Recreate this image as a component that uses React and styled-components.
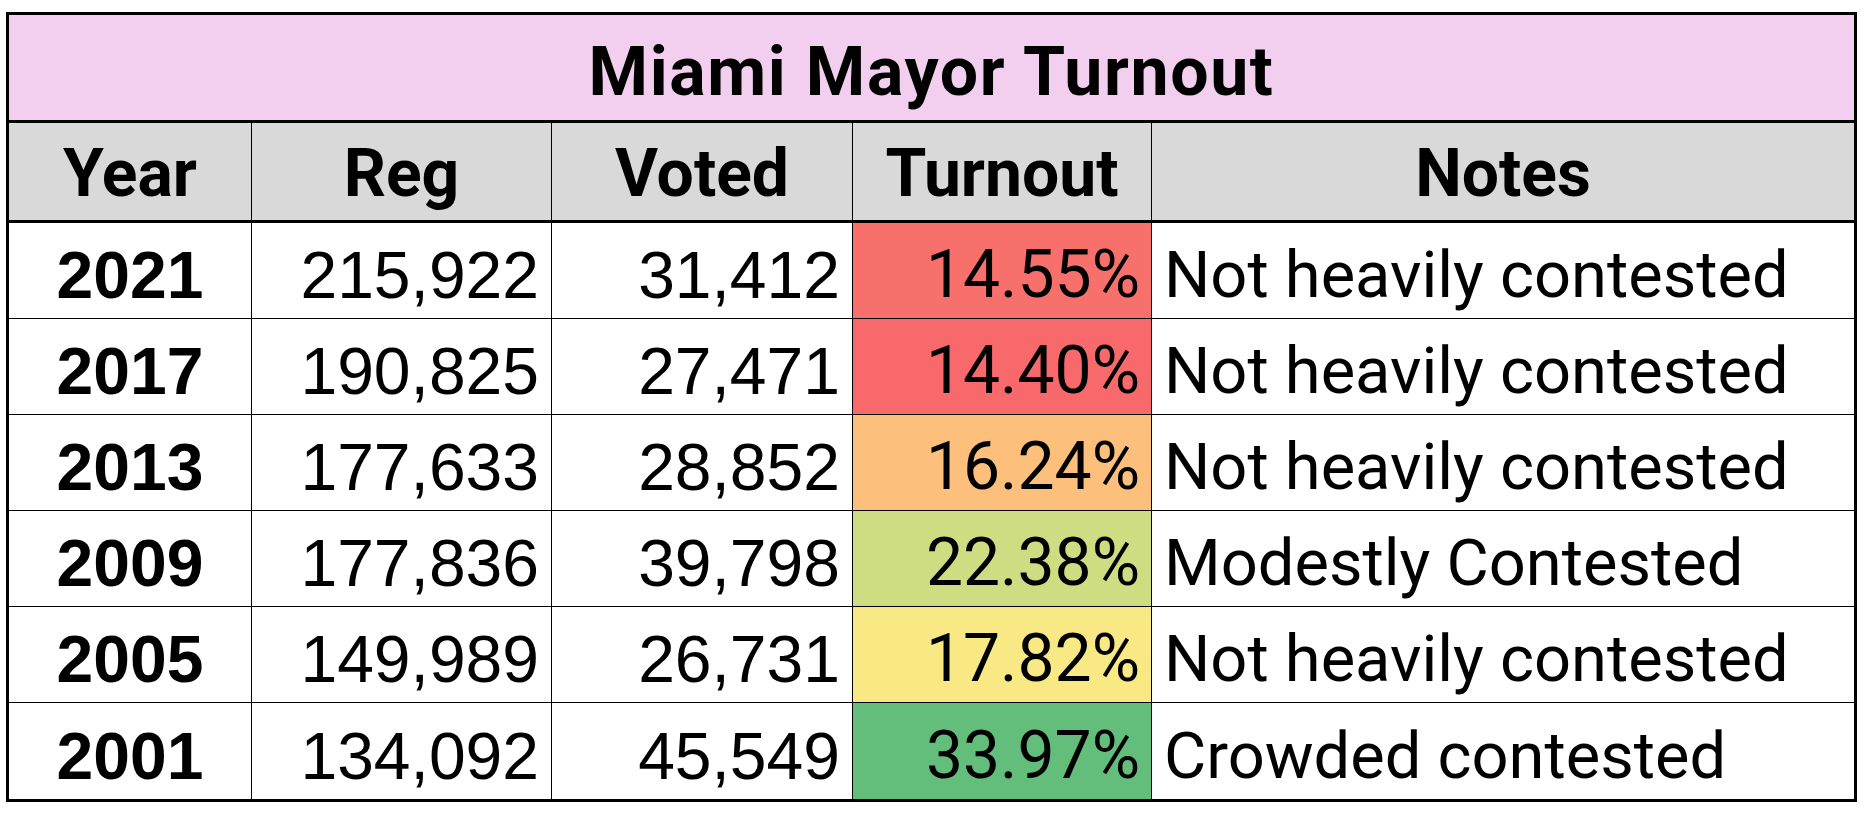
import styled, { createGlobalStyle, css } from 'styled-components'

const GlobalStyle = createGlobalStyle`
  * { box-sizing: border-box; }
  body {
    margin: 0;
    background: #ffffff;
    color: #000000;
  }
`

const rows = [
  { year: 2021, reg: '215,922', voted: '31,412', turnout: '14.55%', color: '#F8706C', note: 'Not heavily contested' },
  { year: 2017, reg: '190,825', voted: '27,471', turnout: '14.40%', color: '#F8696B', note: 'Not heavily contested' },
  { year: 2013, reg: '177,633', voted: '28,852', turnout: '16.24%', color: '#FCC07C', note: 'Not heavily contested' },
  { year: 2009, reg: '177,836', voted: '39,798', turnout: '22.38%', color: '#CEDD81', note: 'Modestly Contested' },
  { year: 2005, reg: '149,989', voted: '26,731', turnout: '17.82%', color: '#F8E984', note: 'Not heavily contested' },
  { year: 2001, reg: '134,092', voted: '45,549', turnout: '33.97%', color: '#63BE7B', note: 'Crowded contested' }
]

const columns = '243px 300px 301px 299px 1fr'

const Page = styled.div`
  padding: 12px 0 0 6px;
`

const Sheet = styled.div`
  width: 1851px;
  border: 3px solid #000000;
`

const TitleBar = styled.div`
  height: 108px;
  display: flex;
  align-items: flex-end;
  justify-content: center;
  padding-bottom: 14px;
  background: #f2cfee;
  border-bottom: 3px solid #000000;
  font-family: Roboto, 'Liberation Sans', sans-serif;
  font-weight: 700;
  font-size: 68px;
  letter-spacing: 1.6px;
  line-height: 1;
`

const Grid = styled.div`
  display: grid;
  grid-template-columns: ${columns};
  height: ${(p) => p.$height}px;
  border-bottom: ${(p) => (p.$rule ? `${p.$rule}px solid #000000` : 'none')};
  background: ${(p) => p.$bg || 'transparent'};
`

const cellBase = css`
  display: flex;
  align-items: flex-end;
  line-height: 1;
  white-space: nowrap;
  border-right: 1px solid #000000;
  &:last-child {
    border-right: none;
  }
`

const HeaderCell = styled.div`
  ${cellBase}
  justify-content: center;
  padding-bottom: 13px;
  font-family: Roboto, 'Liberation Sans', sans-serif;
  font-weight: 700;
  font-size: 66px;
`

const YearCell = styled.div`
  ${cellBase}
  justify-content: center;
  padding-bottom: 10px;
  font-family: 'Liberation Sans', Arial, sans-serif;
  font-weight: 700;
  font-size: 66px;
`

const NumCell = styled.div`
  ${cellBase}
  justify-content: flex-end;
  padding: 0 12px 10px 0;
  font-family: 'Liberation Sans', Arial, sans-serif;
  font-size: 66px;
`

const TurnoutCell = styled.div`
  ${cellBase}
  justify-content: flex-end;
  padding: 0 11px 10px 0;
  background: ${(p) => p.$bg};
  font-family: Roboto, 'Liberation Sans', sans-serif;
  font-size: 66px;
`

const NoteCell = styled.div`
  ${cellBase}
  justify-content: flex-start;
  padding: 0 0 10px 12px;
  font-family: Roboto, 'Liberation Sans', sans-serif;
  font-size: 65px;
`

const App = () => {
  return (
    <Page>
      <GlobalStyle />
      <Sheet>
        <TitleBar>Miami Mayor Turnout</TitleBar>
        <Grid $height={100} $rule={3} $bg="#d9d9d9">
          <HeaderCell>Year</HeaderCell>
          <HeaderCell>Reg</HeaderCell>
          <HeaderCell>Voted</HeaderCell>
          <HeaderCell>Turnout</HeaderCell>
          <HeaderCell>Notes</HeaderCell>
        </Grid>
        {rows.map((row, i) => (
          <Grid key={row.year} $height={96} $rule={i < rows.length - 1 ? 1 : 0}>
            <YearCell>{row.year}</YearCell>
            <NumCell>{row.reg}</NumCell>
            <NumCell>{row.voted}</NumCell>
            <TurnoutCell $bg={row.color}>{row.turnout}</TurnoutCell>
            <NoteCell>{row.note}</NoteCell>
          </Grid>
        ))}
      </Sheet>
    </Page>
  )
}

export default App
